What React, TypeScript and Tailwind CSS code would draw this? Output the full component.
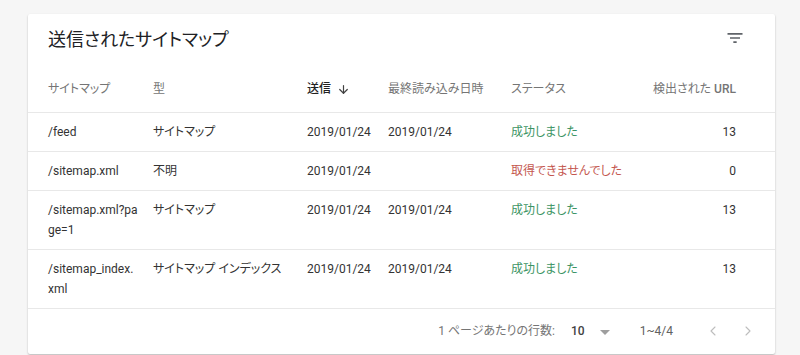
import { ArrowDown, ChevronLeft, ChevronRight } from "lucide-react";

const rows = [
  { path: "/feed", type: "サイトマップ", sent: "2019/01/24", read: "2019/01/24", ok: true, count: 13 },
  { path: "/sitemap.xml", type: "不明", sent: "2019/01/24", read: "", ok: false, count: 0 },
  { path: "/sitemap.xml?page=1", type: "サイトマップ", sent: "2019/01/24", read: "2019/01/24", ok: true, count: 13 },
  { path: "/sitemap_index.xml", type: "サイトマップ インデックス", sent: "2019/01/24", read: "2019/01/24", ok: true, count: 13 },
];

function FilterIcon() {
  return (
    <svg width="20" height="20" viewBox="0 0 24 24" className="fill-[#5f6368]">
      <path d="M10 18h4v-2h-4v2zM3 6v2h18V6H3zm3 7h12v-2H6v2z" />
    </svg>
  );
}

export default function App() {
  return (
    <div className="h-[355px] overflow-hidden bg-[#f6f6f6] pt-[14px] pl-[28px] pr-[25px] font-['Roboto','Noto_Sans_CJK_JP',sans-serif] [font-feature-settings:'palt'] text-[#333333]">
      {/* Card */}
      <div className="bg-white rounded-[2px] shadow-[0_1px_2px_rgba(0,0,0,0.25)]">
        {/* Header */}
        <div className="flex items-center justify-between h-[53px] pl-5 pr-[26px]">
          <h2 className="text-[18px] text-[#202124] -mt-[2px]">送信されたサイトマップ</h2>
          <button className="p-1 -mt-[6px]">
            <FilterIcon />
          </button>
        </div>

        {/* Table */}
        <table className="w-full table-fixed border-collapse text-[12px]">
          <thead>
            <tr className="h-[45px] border-b border-[#e8e8e8] text-[#757575]">
              <th className="w-[125px] pl-5 pr-[14px] text-left font-normal">サイトマップ</th>
              <th className="w-[154px] pr-4 text-left font-normal">型</th>
              <th className="w-[81px] pr-2 text-left font-medium text-[#212121]">
                <span className="inline-flex items-center gap-[6px]">
                  送信
                  <ArrowDown size={13} strokeWidth={2.2} className="text-[#424242]" />
                </span>
              </th>
              <th className="w-[123px] pr-4 text-left font-normal">最終読み込み日時</th>
              <th className="text-left font-normal">ステータス</th>
              <th className="w-[125px] pr-[39px] text-right font-normal whitespace-nowrap">
                検出された <span className="font-medium">URL</span>
              </th>
            </tr>
          </thead>
          <tbody>
            {rows.map((r) => (
              <tr key={r.path} className="border-b border-[#e8e8e8] align-top leading-[20px]">
                <td className="pl-5 pr-[14px] pt-[9px] pb-[9px] break-all">{r.path}</td>
                <td className="pr-4 pt-[9px] pb-[9px]">{r.type}</td>
                <td className="pr-2 pt-[9px] pb-[9px]">{r.sent}</td>
                <td className="pr-4 pt-[9px] pb-[9px]">{r.read}</td>
                <td className={`pt-[9px] pb-[9px] whitespace-nowrap ${r.ok ? "text-[#3c9464]" : "text-[#c4574f]"}`}>
                  {r.ok ? "成功しました" : "取得できませんでした"}
                </td>
                <td className="pr-[39px] pt-[9px] pb-[9px] text-right">{r.count}</td>
              </tr>
            ))}
          </tbody>
        </table>

        {/* Footer */}
        <div className="flex items-center justify-end h-[45px] pr-[19px] text-[12px]">
          <span className="text-[#757575]">1 ページあたりの行数:</span>
          <span className="ml-[16px] font-medium text-[#424242]">10</span>
          <svg width="10" height="5" viewBox="0 0 10 5" className="ml-[15px] mt-[2px] fill-[#9e9e9e]">
            <path d="M0 0l5 5 5-5z" />
          </svg>
          <span className="ml-[30px] text-[#616161]">1~4/4</span>
          <ChevronLeft size={16} strokeWidth={1.6} className="ml-[32px] text-[#bdbdbd]" />
          <ChevronRight size={16} strokeWidth={1.6} className="ml-[19px] text-[#bdbdbd]" />
        </div>
      </div>
    </div>
  );
}
